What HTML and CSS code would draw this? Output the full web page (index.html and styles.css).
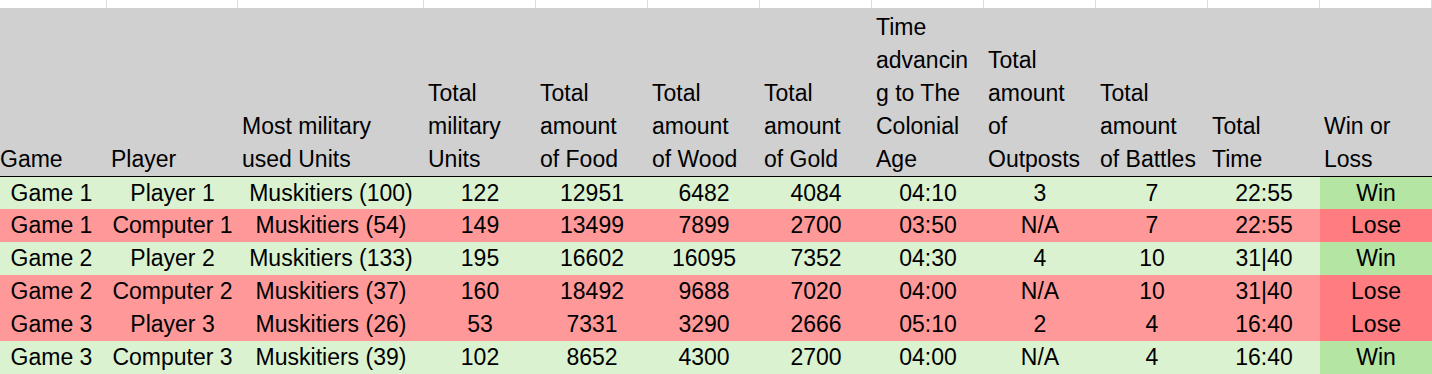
FILE: index.html
```html
<!DOCTYPE html>
<html lang="en">
<head>
<meta charset="utf-8">
<title>Game stats</title>
<link rel="stylesheet" href="styles.css">
</head>
<body>
<div class="sheet">
  <div class="top"></div><div class="top"></div><div class="top"></div><div class="top"></div><div class="top"></div><div class="top"></div><div class="top"></div><div class="top"></div><div class="top"></div><div class="top"></div><div class="top"></div><div class="top"></div>

  <div class="head"><span>Game</span></div>
  <div class="head"><span>Player</span></div>
  <div class="head"><span>Most military<br>used Units</span></div>
  <div class="head"><span>Total<br>military<br>Units</span></div>
  <div class="head"><span>Total<br>amount<br>of Food</span></div>
  <div class="head"><span>Total<br>amount<br>of Wood</span></div>
  <div class="head"><span>Total<br>amount<br>of Gold</span></div>
  <div class="head"><span>Time<br>advancin<br>g to The<br>Colonial<br>Age</span></div>
  <div class="head"><span>Total<br>amount<br>of<br>Outposts</span></div>
  <div class="head"><span>Total<br>amount<br>of Battles</span></div>
  <div class="head"><span>Total<br>Time</span></div>
  <div class="head"><span>Win or<br>Loss</span></div>

  <div class="row win first">
    <div class="c">Game 1</div><div class="c">Player 1</div><div class="c">Muskitiers (100)</div><div class="c">122</div><div class="c">12951</div><div class="c">6482</div><div class="c">4084</div><div class="c">04:10</div><div class="c">3</div><div class="c">7</div><div class="c">22:55</div><div class="c result">Win</div>
  </div>
  <div class="row lose">
    <div class="c">Game 1</div><div class="c">Computer 1</div><div class="c">Muskitiers (54)</div><div class="c">149</div><div class="c">13499</div><div class="c">7899</div><div class="c">2700</div><div class="c">03:50</div><div class="c">N/A</div><div class="c">7</div><div class="c">22:55</div><div class="c result">Lose</div>
  </div>
  <div class="row win">
    <div class="c">Game 2</div><div class="c">Player 2</div><div class="c">Muskitiers (133)</div><div class="c">195</div><div class="c">16602</div><div class="c">16095</div><div class="c">7352</div><div class="c">04:30</div><div class="c">4</div><div class="c">10</div><div class="c">31|40</div><div class="c result">Win</div>
  </div>
  <div class="row lose">
    <div class="c">Game 2</div><div class="c">Computer 2</div><div class="c">Muskitiers (37)</div><div class="c">160</div><div class="c">18492</div><div class="c">9688</div><div class="c">7020</div><div class="c">04:00</div><div class="c">N/A</div><div class="c">10</div><div class="c">31|40</div><div class="c result">Lose</div>
  </div>
  <div class="row lose">
    <div class="c">Game 3</div><div class="c">Player 3</div><div class="c">Muskitiers (26)</div><div class="c">53</div><div class="c">7331</div><div class="c">3290</div><div class="c">2666</div><div class="c">05:10</div><div class="c">2</div><div class="c">4</div><div class="c">16:40</div><div class="c result">Lose</div>
  </div>
  <div class="row win">
    <div class="c">Game 3</div><div class="c">Computer 3</div><div class="c">Muskitiers (39)</div><div class="c">102</div><div class="c">8652</div><div class="c">4300</div><div class="c">2700</div><div class="c">04:00</div><div class="c">N/A</div><div class="c">4</div><div class="c">16:40</div><div class="c result">Win</div>
  </div>
</div>
</body>
</html>
```

FILE: styles.css
```css
html, body {
  margin: 0;
  padding: 0;
  background: #ffffff;
  overflow: hidden;
}

.sheet {
  margin-left: -4px;
  width: 1436px;
  display: grid;
  grid-template-columns: 111px 131px 186px repeat(9, 112px);
  grid-template-rows: 8px 168px repeat(6, 33px);
  font-family: "Liberation Sans", Arial, sans-serif;
  font-size: 23px;
  color: #000000;
}

.top {
  box-sizing: border-box;
  border-right: 1px solid #dcdcdc;
  background: #ffffff;
}

.head {
  background: #d0d0d0;
  display: flex;
  align-items: flex-end;
  padding: 0 0 0 4px;
  line-height: 33px;
  white-space: nowrap;
  overflow: hidden;
}

.row {
  display: contents;
}

.c {
  box-sizing: border-box;
  text-align: center;
  line-height: 33px;
  white-space: nowrap;
}

.first .c {
  border-top: 1px solid #000000;
  line-height: 32px;
}

.win .c {
  background: #daf2d0;
}

.lose .c {
  background: #ff9999;
}

.win .result {
  background: #b4e5a2;
}

.lose .result {
  background: #ff7c80;
}
```
